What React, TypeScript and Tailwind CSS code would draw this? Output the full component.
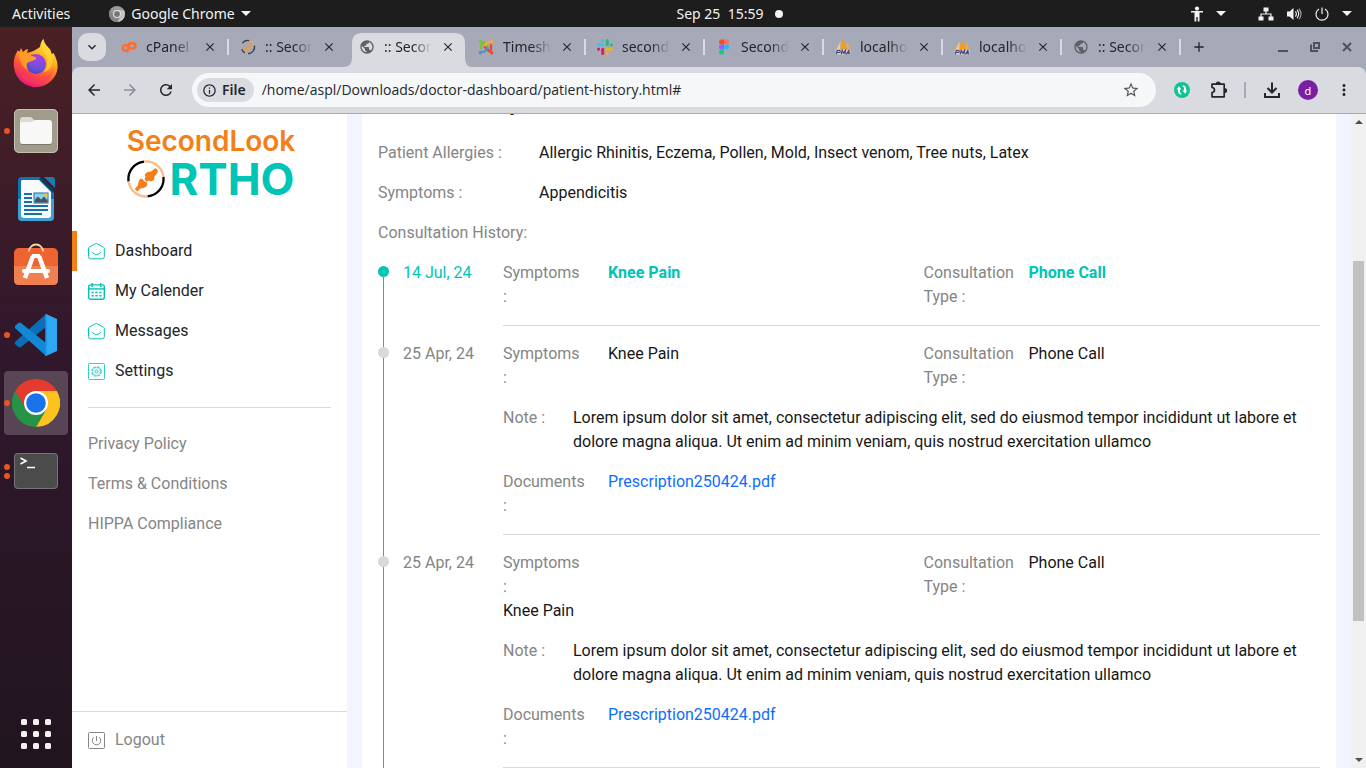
import React from "react";
import {
  MdArrowBack,
  MdArrowForward,
  MdClose,
  MdKeyboardArrowDown,
  MdMoreVert,
  MdAdd,
  MdPublic,
  MdRefresh,
  MdStarBorder,
  MdInfoOutline,
} from "react-icons/md";

/* ---------- Favicons ---------- */

function CpanelIcon() {
  return (
    <svg viewBox="0 0 16 16" className="size-4" fill="none" stroke="#ff6c2c" strokeWidth="2.6" strokeLinecap="round" strokeLinejoin="round">
      <path d="M6.800 6.300H4.400a2.600 2.600 0 0 0 0 5.200h1.100" />
      <path d="M6.600 12.400 8.700 4.300h3.200a2.600 2.600 0 0 1 0 5.200H9.600" />
    </svg>
  );
}

function OrthoFavicon() {
  return (
    <svg viewBox="0 0 16 16" className="size-4" fill="none">
      <path d="M2.400 4.200A6.600 6.600 0 0 1 9.500 1.600M1.600 9.600A6.600 6.600 0 0 0 5 13.900" stroke="#3a3d45" strokeWidth="1.300" />
      <path d="M9.500 1.600a6.600 6.600 0 0 1 4.900 5M1.500 6.800a6.600 6.600 0 0 0 .3 3.400M5 13.900a6.600 6.600 0 0 0 3 .7" stroke="#e8a676" strokeWidth="1.300" />
      <path d="M14.400 6.600A6.600 6.600 0 0 1 8 14.600" stroke="#3a3d45" strokeWidth="1.300" />
      <path d="M4.200 11.800 7 7.200l1-.3 3.200-3.300 1 1L9.600 8.400l-.4 1-4 3.300z" fill="#f8992f" />
    </svg>
  );
}

function JoomlaIcon() {
  return (
    <svg viewBox="0 0 16 16" className="size-4" fill="none" strokeWidth="2.200" strokeLinecap="round" strokeLinejoin="round">
      <path d="M3 10V5.800L5.200 4l4.600 4.400" stroke="#7ac043" />
      <path d="M6 3.200 4.600 2.600 2.600 2.600" stroke="#7ac043" />
      <path d="M6 7l4.200-4 3 .2" stroke="#f9a541" />
      <path d="M13 6v4.400L11 12.400 6.600 8" stroke="#f44321" />
      <path d="m10 9-4 4-3-.2" stroke="#5091cd" />
      <circle cx="2.300" cy="2.300" r="1.700" fill="#7ac043" />
      <circle cx="13.700" cy="2.300" r="1.700" fill="#f9a541" />
      <circle cx="13.700" cy="13.700" r="1.700" fill="#f44321" />
      <circle cx="2.300" cy="13.700" r="1.700" fill="#5091cd" />
    </svg>
  );
}

function SlackIcon() {
  return (
    <svg viewBox="0 0 16 16" className="size-4">
      <g fill="#36c5f0">
        <rect x="0" y="4.200" width="7.200" height="3" rx="1.500" />
        <path d="M5.700 0a1.500 1.500 0 0 1 1.500 1.500V3H5.700a1.500 1.500 0 0 1 0-3z" />
      </g>
      <g fill="#2eb67d">
        <rect x="8.800" y="0" width="3" height="7.200" rx="1.500" />
        <path d="M16 5.700a1.500 1.500 0 0 1-1.500 1.500H13V5.700a1.500 1.500 0 0 1 3 0z" />
      </g>
      <g fill="#ecb22e">
        <rect x="8.800" y="8.800" width="7.200" height="3" rx="1.500" />
        <path d="M10.300 16a1.500 1.500 0 0 1-1.500-1.500V13h1.500a1.500 1.500 0 0 1 0 3z" />
      </g>
      <g fill="#e01e5a">
        <rect x="4.200" y="8.800" width="3" height="7.200" rx="1.500" />
        <path d="M0 10.300a1.500 1.500 0 0 1 1.500-1.500H3v1.500a1.500 1.500 0 0 1-3 0z" />
      </g>
    </svg>
  );
}

function FigmaIcon() {
  return (
    <svg viewBox="0 0 16 16" className="size-4">
      <path d="M8 .5H5.500a2.500 2.500 0 0 0 0 5H8z" fill="#f24e1e" />
      <path d="M8 .5h2.500a2.500 2.500 0 0 1 0 5H8z" fill="#ff7262" />
      <path d="M8 5.500H5.500a2.500 2.500 0 0 0 0 5H8z" fill="#a259ff" />
      <circle cx="10.500" cy="8" r="2.500" fill="#1abcfe" />
      <path d="M8 10.500H5.500A2.500 2.500 0 1 0 8 13z" fill="#0acf83" />
    </svg>
  );
}

function PmaIcon() {
  return (
    <svg viewBox="0 0 16 16" className="size-4">
      <path d="M5.600 2 1.600 10h3.600z" fill="#f6c78a" />
      <path d="M7.400.8 5.800 10h5.400C11 6 9.600 3 7.400.8z" fill="#f89c0e" />
      <path d="M11.400 3.200 11.800 10h3C14.600 7 13.200 4.600 11.400 3.200z" fill="#f6ab45" />
      <path d="M.5 10.500h15v5.200H.5z" fill="#e3e4ea" opacity=".6" />
      <path d="M1.300 15.300 2.200 11.500h2.300c1.200 0 1 2-.4 2H2.200M6.300 15.300l.9-3.800L8.500 14l2-2.500-.6 3.800M11.300 15.300l2.500-3.800.7 3.800M12.500 14.200h2" stroke="#4a4478" strokeWidth="1.200" fill="none" />
    </svg>
  );
}

const globe = <MdPublic className="size-4 text-[#5d6066]" />;

type Tab = { title: string; icon: React.ReactNode; active?: boolean; divider?: boolean };

const tabs: Tab[] = [
  { title: "cPanel - Tools", icon: <CpanelIcon />, divider: true },
  { title: ":: Second Look", icon: <OrthoFavicon /> },
  { title: ":: Second Look", icon: globe, active: true },
  { title: "Timesheets", icon: <JoomlaIcon />, divider: true },
  { title: "secondlook", icon: <SlackIcon />, divider: true },
  { title: "SecondLook", icon: <FigmaIcon />, divider: true },
  { title: "localhost", icon: <PmaIcon />, divider: true },
  { title: "localhost", icon: <PmaIcon />, divider: true },
  { title: ":: Second Look", icon: globe, divider: true },
];

/* ---------- Desktop top bar ---------- */

function Caret() {
  return (
    <svg viewBox="0 0 10 5" className="h-[5px] w-[10px]" fill="#f2f2f2">
      <path d="M0 0h10L5 5z" />
    </svg>
  );
}

function TopBar() {
  return (
    <header className="grid h-[27px] shrink-0 grid-cols-3 items-center bg-[#1d1d1d] px-3 font-['Noto_Sans',sans-serif] text-sm text-[#f2f2f2]">
      <div className="flex items-center gap-[39px]">
        <button type="button">Activities</button>
        <button type="button" className="flex items-center gap-[6px] whitespace-nowrap">
          <svg viewBox="0 0 16 16" className="size-4">
            <circle cx="8" cy="8" r="8" fill="#9a9a9a" />
            <path d="M8 4.200h7A8 8 0 0 1 8.500 16l3.300-6z" fill="#c4c4c4" />
            <path d="M1.300 3.800A8 8 0 0 0 8.500 16l1.800-4.200-5.600-2z" fill="#868686" />
            <circle cx="8" cy="8" r="3.900" fill="#e4e4e4" />
            <circle cx="8" cy="8" r="2.900" fill="#777" />
          </svg>
          Google Chrome
          <Caret />
        </button>
      </div>
      <div className="flex items-center justify-center gap-3 pl-[94px]">
        <button type="button" className="whitespace-pre">{"Sep 25  15:59"}</button>
        <span className="size-2 rounded-full bg-[#f2f2f2]" />
      </div>
      <div className="flex items-center justify-end pr-[2px]">
        <button type="button" aria-label="Accessibility" className="flex items-center gap-3">
          <svg viewBox="0 0 14 16" className="h-4 w-[14px]" fill="#f2f2f2">
            <circle cx="7" cy="2.600" r="2.100" />
            <path d="M1 5h12v1.500H9.500V15.500H7.700V11H6.300v4.500H4.500v-9H1z" />
          </svg>
          <Caret />
        </button>
        <button type="button" aria-label="System menu" className="ml-8 flex items-center gap-3">
          <svg viewBox="0 0 16 16" className="size-4" fill="#f2f2f2">
            <path d="M5.500 1.500h5v4h-5zM.5 10.500h5v4h-5zM10.500 10.500h5v4h-5z" />
            <path d="M8 5v3M3 11V8h10v3" stroke="#f2f2f2" strokeWidth="1.200" fill="none" />
          </svg>
          <svg viewBox="0 0 16 16" className="size-4" fill="none" stroke="#f2f2f2" strokeWidth="1.200">
            <path d="M1 5.500h2.500L7.500 2v12L3.500 10.500H1z" fill="#f2f2f2" stroke="none" />
            <path d="M9.300 5.500c1.400 1.200 1.400 3.800 0 5M11 4c2.300 2 2.300 6 0 8" />
            <path d="M12.800 2.800c3 2.700 3 7.700 0 10.400" opacity=".6" />
          </svg>
          <svg viewBox="0 0 16 16" className="size-4" fill="none" stroke="#f2f2f2" strokeWidth="1.200">
            <path d="M8 1.500v6.500M5 3a6 6 0 1 0 6 0" />
          </svg>
          <Caret />
        </button>
      </div>
    </header>
  );
}

/* ---------- Dock ---------- */

function Firefox() {
  return (
    <svg viewBox="0 1 48 48" className="size-12">
      <defs>
        <linearGradient id="ff-body" x1=".8" y1="0" x2=".3" y2="1">
          <stop offset="0" stopColor="#fff44f" />
          <stop offset=".35" stopColor="#ffb320" />
          <stop offset=".65" stopColor="#ff5a36" />
          <stop offset="1" stopColor="#e5137f" />
        </linearGradient>
        <radialGradient id="ff-orb" cx=".6" cy=".2" r=".9">
          <stop offset="0" stopColor="#a640e6" />
          <stop offset=".6" stopColor="#6b51dd" />
          <stop offset="1" stopColor="#4040b8" />
        </radialGradient>
      </defs>
      <path d="M28 9c.5-4 2-7 3.500-8 .2 5 4 7 7 11l1 4 2-1c4 7 5.500 14 2.500 21A22 22 0 0 1 2 29c-1-7 1-12 4-17l1 3 2-5 2 4c2-2 4-3 5-3l-1 4c5-1 9-3 13-6z" fill="url(#ff-body)" />
      <path d="M31.500 1c-2 6-2 9 1 13 4 6 4 14-1 20 6-1 9-6 9-14 0-8-8-12-9-19z" fill="#ffd936" opacity=".7" />
      <circle cx="24" cy="26" r="10" fill="url(#ff-orb)" />
      <path d="M6 13c4 1 6 2 9 2 2 3 6 3 9 4 1 3-4 4-7 5-3 1-3 4-1 8-6-3-9-10-10-19z" fill="#ff9a28" />
      <path d="M6 30c4 9 14 13 24 10 6-2 10-6 12-11-1 10-9 17-18 17S8 41 6 30z" fill="#ff3b5c" opacity=".45" />
    </svg>
  );
}

function Files() {
  return (
    <svg viewBox="0 0 48 48" className="size-12">
      <rect x="2" y="2" width="44" height="44" rx="5" fill="#a09b8a" />
      <rect x="2.500" y="2.500" width="43" height="43" rx="4.500" fill="none" stroke="#c5c1b4" />
      <path d="M8 13q0-3 3-3h8l4 4v4H8z" fill="#dedacd" />
      <path d="M8 17q0-2 2-2h10l3-2h14q3 0 3 3v18q0 3-3 3H11q-3 0-3-3z" fill="#f8f8f7" />
      <path d="M9 37.500h30" stroke="#7d796b" />
    </svg>
  );
}

function Writer() {
  return (
    <svg viewBox="0 0 48 48" className="size-12">
      <path d="M10 2h18l14 14v26q0 4-4 4H10q-4 0-4-4V6q0-4 4-4z" fill="#0e74ae" />
      <path d="M6 24h36v18q0 4-4 4H10q-4 0-4-4z" fill="#3ea1d4" />
      <path d="M10 5h17l12 12v23q0 3-3 3H12q-3 0-3-3V6z" fill="#f8fafb" />
      <path d="M32 2h8q3 0 3 3v8z" fill="#1b7cae" />
      <path d="M28 3l14 14" stroke="#073f66" strokeWidth="2.500" />
      <path d="M12 19h8M12 23h8M12 27h8M12 31h24M12 35h24M12 39h18" stroke="#1672a6" strokeWidth="2" />
      <rect x="22" y="18" width="14" height="10" fill="#8dd0f0" stroke="#1672a6" />
      <path d="M23 27.500v-3l3-3 3 3 3-3 3.500 4v2z" fill="#48525a" />
      <path d="M32 18.500h3.500V22q-3 0-3.500-3.500z" fill="#fbc02d" />
    </svg>
  );
}

function Software() {
  return (
    <svg viewBox="0 3 48 48" className="size-12">
      <rect x="2" y="8" width="44" height="37" rx="5" fill="#ee6430" />
      <path d="M2 26h44v14q0 5-5 5H7q-5 0-5-5z" fill="#f0804f" />
      <path d="M17 11.500a7 7 0 0 1 14 0" fill="none" stroke="#f6d5ae" strokeWidth="1.800" />
      <g stroke="#fff" strokeLinecap="round" fill="none">
        <path d="m21 16-8 22M27 16l8 22" strokeWidth="4.500" strokeLinecap="butt" />
        <path d="M20 16h8" strokeWidth="4" strokeLinecap="butt" />
        <path d="M12 31h24" strokeWidth="4.200" />
      </g>
    </svg>
  );
}

function VsCode() {
  return (
    <svg viewBox="0 0 48 48" className="size-12">
      <path d="M34 3 45 8v32l-11 5z" fill="#2ea8f4" />
      <path d="M34 3v13L9 36q-1.500 1-3-.3L3.500 33.500q-1.500-1.500 0-3z" fill="#0a6fb8" />
      <path d="M34 45V32L9 12q-1.500-1-3 .3L3.500 14.500q-1.500 1.500 0 3z" fill="#1287d4" />
      <path d="M34 3v42" stroke="#2196e4" strokeWidth="1.500" />
    </svg>
  );
}

function Chrome() {
  return (
    <svg viewBox="0 0 48 48" className="size-12">
      <path d="M24 12H44.800A24 24 0 0 0 3.200 12L13.600 30 24 24z" fill="#e33b2e" />
      <path d="M24 12h20.800A24 24 0 0 1 24 48l10.400-18L24 24z" fill="#fcc31e" />
      <path d="M3.200 12A24 24 0 0 0 24 48l10.400-18L24 24l-10.400 6z" fill="#269446" />
      <circle cx="24" cy="24" r="12" fill="#fff" />
      <circle cx="24" cy="24" r="9.800" fill="#1a73e8" />
    </svg>
  );
}

function Terminal() {
  return (
    <svg viewBox="0 0 48 48" className="size-12">
      <rect x="2" y="6" width="44" height="36" rx="4" fill="#4b4b4b" />
      <rect x="2.500" y="6.500" width="43" height="35" rx="3.500" fill="none" stroke="#757575" />
      <path d="m8.500 11 5.500 3-5.500 3M15 20.500h8" stroke="#fff" strokeWidth="1.600" fill="none" />
    </svg>
  );
}

const dock = [
  { name: "Firefox", icon: <Firefox />, windows: 0 },
  { name: "Files", icon: <Files />, windows: 1 },
  { name: "LibreOffice Writer", icon: <Writer />, windows: 0 },
  { name: "Software", icon: <Software />, windows: 0 },
  { name: "Visual Studio Code", icon: <VsCode />, windows: 1 },
  { name: "Google Chrome", icon: <Chrome />, windows: 1, active: true },
  { name: "Terminal", icon: <Terminal />, windows: 2 },
];

function Dock() {
  return (
    <nav aria-label="Dock" className="flex w-[72px] shrink-0 flex-col items-center gap-1 bg-linear-to-b from-[#4b2024] via-[#30172c] via-45% to-[#21151f] pt-[4px] pb-[2px]">
      {dock.map((app) => (
        <button
          key={app.name}
          type="button"
          aria-label={app.name}
          className={`relative flex size-16 items-center justify-center rounded ${app.active ? "bg-white/20" : ""}`}
        >
          <span className="absolute inset-y-0 left-0 flex flex-col items-center justify-center gap-[3px]">
            {Array.from({ length: app.windows }, (_, i) => (
              <i key={i} className="size-[6px] rounded-full bg-[#e95420]" />
            ))}
          </span>
          {app.icon}
        </button>
      ))}
      <button type="button" aria-label="Show applications" className="mt-auto flex size-16 items-center justify-center">
        <svg viewBox="0 0 30 30" className="size-[30px]" fill="#f2f1ef">
          {[0, 12, 24].map((y) => [0, 12, 24].map((x) => <rect key={`${x}-${y}`} x={x} y={y} width="6" height="6" rx="1.500" />))}
        </svg>
      </button>
    </nav>
  );
}

/* ---------- Browser chrome ---------- */

function TabStrip() {
  return (
    <div className="flex h-10 shrink-0 items-center bg-[#a6a9b7] pl-[6px] text-[#24262b]">
      <button type="button" aria-label="Search tabs" className="mr-1 flex size-7 shrink-0 items-center justify-center rounded-[10px] bg-[#dadbe1]">
        <MdKeyboardArrowDown className="size-4" />
      </button>
      {tabs.map((tab, i) => (
        <div key={i} className="relative flex h-full w-[119px] shrink-0 items-center">
          {tab.active && (
            <svg viewBox="0 0 129 34" className="absolute bottom-0 -left-[5px] h-[34px] w-[129px]" fill="#dadbe1">
              <path d="M0 34q9 0 9-9V10Q9 0 19 0h93q10 0 10 10v14q0 10 7 10z" />
            </svg>
          )}
          <div className="relative flex w-full items-center pl-[11px]">
            <span className="shrink-0">{tab.icon}</span>
            <span className="ml-[9px] w-12 overflow-hidden mask-r-from-60% text-sm whitespace-nowrap">{tab.title}</span>
            <button type="button" aria-label="Close tab" className="ml-2 flex size-4 items-center justify-center">
              <MdClose className="size-[14px]" />
            </button>
            {tab.divider && <span className="ml-auto h-4 w-[2px] bg-[#dadbe1]" />}
          </div>
        </div>
      ))}
      <button type="button" aria-label="New tab" className="ml-2 flex size-5 items-center justify-center">
        <MdAdd className="size-4" />
      </button>
      <div className="ml-auto flex items-center gap-4 pr-[11px] text-[#4e5159]">
        <button type="button" aria-label="Minimize">
          <svg viewBox="0 0 16 16" className="size-4"><path d="M3 12h10" stroke="currentColor" strokeWidth="2" /></svg>
        </button>
        <button type="button" aria-label="Restore">
          <svg viewBox="0 0 16 16" className="size-4" fill="none" stroke="currentColor" strokeWidth="2"><path d="M7 4h5v5H7zM4 5.500V12h7" /></svg>
        </button>
        <button type="button" aria-label="Close">
          <svg viewBox="0 0 16 16" className="size-4"><path d="m4 4 8 8m0-8-8 8" stroke="currentColor" strokeWidth="2" /></svg>
        </button>
      </div>
    </div>
  );
}

function Toolbar() {
  return (
    <div className="bg-[#a6a9b7]">
      <div className="flex h-[47px] shrink-0 items-center rounded-t-lg border-b border-[#a9a9b0] bg-[#dadbe1] px-[13px] text-[#24262b]">
        <div className="flex items-center gap-[18px]">
          <button type="button" aria-label="Back"><MdArrowBack className="size-[18px]" /></button>
          <button type="button" aria-label="Forward" className="text-[#8d8f96]"><MdArrowForward className="size-[18px]" /></button>
          <button type="button" aria-label="Reload"><MdRefresh className="size-[18px]" /></button>
        </div>
        <div className="ml-[17px] flex h-[34px] min-w-0 flex-1 items-center rounded-full bg-[#f6f7f9] pr-4 pl-[5px] font-['Open_Sans',sans-serif] text-sm">
          <button type="button" className="flex h-6 items-center gap-[5px] rounded-full bg-[#dadbe1] px-[5px] pr-2 font-['Noto_Sans',sans-serif] font-semibold">
            <MdInfoOutline className="size-[15px]" />
            File
          </button>
          <input
            aria-label="Address"
            className="ml-2 min-w-0 flex-1 bg-transparent outline-none"
            defaultValue="/home/aspl/Downloads/doctor-dashboard/patient-history.html#"
          />
          <button type="button" aria-label="Bookmark" className="text-[#55575d]"><MdStarBorder className="size-[18px]" /></button>
        </div>
        <div className="ml-[17px] flex items-center">
          <button type="button" aria-label="Sync extension">
            <svg viewBox="0 0 18 18" className="size-[18px]" fill="none">
              <circle cx="9" cy="9" r="8" fill="#0fc494" />
              <path d="M6 11.500V7.500M12 6.500v4" stroke="#fff" strokeWidth="2" />
              <path d="M6 11q.3 1.800 2.300 2M12 7q-.3-1.800-2.300-2" stroke="#fff" strokeWidth="1.600" />
              <path d="m3.600 8.500 2.400-3.300 2.400 3.300zM9.600 9.500l2.400 3.300 2.400-3.300z" fill="#fff" />
            </svg>
          </button>
          <button type="button" aria-label="Extensions" className="ml-[19px]">
            <svg viewBox="0 0 18 18" className="size-[18px]" fill="none" stroke="currentColor" strokeWidth="1.700" strokeLinejoin="round">
              <path d="M2 3.200h12.200v12.600H2v-4.300c3.300-.4 3.300-4.600 0-5z" />
              <path d="M6.500 3c0-2.300 3.400-2.300 3.400 0M14.500 7.800c2.400 0 2.400 3.400 0 3.400" fill="currentColor" />
            </svg>
          </button>
          <span className="mr-[17px] ml-4 h-4 w-[2px] bg-[#a6a9b7]" />
          <button type="button" aria-label="Downloads">
            <svg viewBox="0 0 18 18" className="size-[18px]" fill="none" stroke="currentColor" strokeWidth="2">
              <path d="M9 1.500v9.500M4.500 7 9 11.500 13.500 7M2 12v4h14v-4" />
            </svg>
          </button>
          <button type="button" aria-label="Profile" className="ml-[17px] flex size-5 items-center justify-center rounded-full bg-[#7b1fa2] font-['Noto_Sans',sans-serif] text-[11px] leading-none text-white">
            d
          </button>
          <button type="button" aria-label="Menu" className="ml-[17px]"><MdMoreVert className="size-[18px]" /></button>
        </div>
      </div>
    </div>
  );
}

function Scrollbar() {
  return (
    <div aria-hidden="true" className="flex w-[15px] shrink-0 flex-col items-center bg-[#f1f1f1]">
      <span className="flex h-4 items-center"><svg viewBox="0 0 8 4" className="h-1 w-2" fill="#505050"><path d="M0 4h8L4 0z" /></svg></span>
      <span className="grow-[131]" />
      <span className="w-[11px] grow-[360] bg-[#c1c1c1]" />
      <span className="grow-[131]" />
      <span className="flex h-4 items-center"><svg viewBox="0 0 8 4" className="h-1 w-2" fill="#505050"><path d="M0 0h8L4 4z" /></svg></span>
    </div>
  );
}

/* ---------- Sidebar ---------- */

function HomeIcon() {
  return (
    <svg viewBox="0 0 17 17" className="size-[17px]" fill="none" stroke="#00c4b6" strokeLinecap="round" strokeLinejoin="round">
      <path d="M.5 5.600Q.5 4.700 1.300 4.200L7.300.8q1-.5 2 0l6.200 3.400q.8.500.8 1.400v8.200q0 2-2 2H2.500q-2 0-2-2z" />
      <path d="M4.500 9.500c2 2.700 6 2.700 8 0" />
    </svg>
  );
}

function CalendarIcon() {
  return (
    <svg viewBox="0 0 17 17" className="size-[17px]" fill="none" stroke="#00c4b6">
      <rect x=".7" y="1.900" width="15.600" height="14.400" rx="2" strokeWidth="1.400" />
      <path d="M4.200 0v4M12.800 0v4" strokeWidth="1.400" />
      <path d="M1 5.900h15" strokeWidth="1.400" />
      <path d="M3.500 9.500h2.300m1.500 0h2.400m1.500 0h2.300M3.500 12.800h2.300m1.500 0h2.400m1.500 0h2.300" strokeWidth="1.600" />
    </svg>
  );
}

function SettingsIcon() {
  return (
    <svg viewBox="0 0 17 17" className="size-[17px]" fill="none" stroke="#00c4b6">
      <rect x=".5" y=".5" width="16" height="16" rx="1" strokeWidth=".8" />
      <circle cx="8.500" cy="8.500" r="4.700" strokeWidth="1.200" strokeDasharray="2.500 1.190" opacity=".8" />
      <circle cx="8.500" cy="8.500" r="3.900" strokeWidth=".5" />
      <circle cx="8.500" cy="8.500" r="1.500" strokeWidth=".9" />
    </svg>
  );
}

function LogoutIcon() {
  return (
    <svg viewBox="0 0 17 17" className="size-[17px]" fill="none" stroke="#858585">
      <rect x=".5" y=".5" width="16" height="16" rx="1" />
      <path d="M8.500 4v5M6 5.200a4.200 4.200 0 1 0 5 0" />
    </svg>
  );
}

function Logo() {
  return (
    <div className="flex h-[117px] flex-col items-center pt-[10px] pl-[3px] font-['Inter',sans-serif]">
      <span className="text-[28px] leading-[34px] font-semibold text-[#f57f17]">SecondLook</span>
      <span className="flex items-center gap-1 leading-[42px]">
        <svg viewBox="0 0 38 38" className="size-[38px]" fill="none">
          <path d="M17 1.700A17.400 17.400 0 0 0 1.600 21.500" stroke="#000" strokeWidth="2.300" />
          <path d="M17 1.600A17.400 17.400 0 0 1 36.400 17" stroke="#fbbd8c" strokeWidth="2.300" />
          <path d="M36.400 17A17.400 17.400 0 0 1 20.500 36.400" stroke="#000" strokeWidth="2.300" />
          <path d="M20.500 36.400A17.400 17.400 0 0 1 1.600 21.500" stroke="#fbbd8c" strokeWidth="2.300" />
          <path d="m17.500 19.500 1-2.500-.8-2.500 2.800-2.500 3.500-.5 4.500-3.500 2 2 .5 2-3.500 4.500-.5 3.500-3 1.500-2.500-1-2 1.200z" fill="#f57f17" />
          <path d="m13 18.800 2.500.2 1.800 2.300 2.700 1.200.3 3-2.800 2.300-4 .7-3 2.800-1.500-.8L7.800 29l3-3.500.7-3.500z" fill="#f57f17" />
        </svg>
        <span className="text-[44px] font-bold text-[#00c4b6]">RTHO</span>
      </span>
    </div>
  );
}

const mainLinks = [
  { label: "Dashboard", icon: <HomeIcon />, active: true },
  { label: "My Calender", icon: <CalendarIcon /> },
  { label: "Messages", icon: <HomeIcon /> },
  { label: "Settings", icon: <SettingsIcon /> },
];

function Sidebar() {
  return (
    <aside className="flex w-[275px] shrink-0 flex-col bg-white">
      <Logo />
      <nav aria-label="Main" className="flex flex-col text-[#212529]">
        {mainLinks.map((link) => (
          <a
            key={link.label}
            href="#"
            className={`flex h-10 items-center gap-[10px] border-l-5 pl-[11px] ${link.active ? "border-[#f57f17]" : "border-transparent"}`}
          >
            {link.icon}
            {link.label}
          </a>
        ))}
      </nav>
      <hr className="mx-4 my-4 border-[#d9d9d9]" />
      <nav aria-label="Legal" className="flex flex-col px-4 text-[#858585]">
        {["Privacy Policy", "Terms & Conditions", "HIPPA Compliance"].map((label) => (
          <a key={label} href="#" className="flex h-10 items-center">{label}</a>
        ))}
      </nav>
      <div className="mt-auto border-t border-[#d9d9d9] px-4 py-2">
        <a href="#" className="flex h-10 items-center gap-[10px] text-[#858585]">
          <LogoutIcon />
          Logout
        </a>
      </div>
    </aside>
  );
}

/* ---------- Patient history ---------- */

type Visit = {
  date: string;
  symptom: string;
  type: string;
  current?: boolean;
  stacked?: boolean;
  note?: string;
  document?: string;
};

const note =
  "Lorem ipsum dolor sit amet, consectetur adipiscing elit, sed do eiusmod tempor incididunt ut labore et dolore magna aliqua. Ut enim ad minim veniam, quis nostrud exercitation ullamco";

const visits: Visit[] = [
  { date: "14 Jul, 24", symptom: "Knee Pain", type: "Phone Call", current: true },
  { date: "25 Apr, 24", symptom: "Knee Pain", type: "Phone Call", note, document: "Prescription250424.pdf" },
  { date: "25 Apr, 24", symptom: "Knee Pain", type: "Phone Call", stacked: true, note, document: "Prescription250424.pdf" },
];

function VisitRow({ visit }: { visit: Visit }) {
  const value = visit.current ? "font-bold text-[#00c4b6]" : "text-[#171717]";
  const label = "w-[105px] shrink-0 pr-6 text-[#858585]";
  return (
    <li className="flex">
      <div className="relative flex w-[25px] shrink-0">
        <span className={`ml-[5px] w-px bg-[#00c4b6] ${visit.current ? "mt-[5px]" : ""}`} />
        <span className={`absolute top-[5px] left-0 size-[11px] rounded-full ${visit.current ? "bg-[#00c4b6]" : "bg-[#d9d9d9]"}`} />
      </div>
      <time className={`w-[100px] shrink-0 ${visit.current ? "text-[#00c4b6]" : "text-[#858585]"}`}>{visit.date}</time>
      <div className="mb-4 flex min-w-0 flex-1 flex-col gap-4 border-b border-[#d9d9d9] pb-4">
        <dl className="grid grid-cols-2 gap-6">
          <div className={visit.stacked ? "block" : "flex"}>
            <dt className={label}>Symptoms :</dt>
            <dd className={value}>{visit.symptom}</dd>
          </div>
          <div className="flex">
            <dt className={label}>Consultation Type :</dt>
            <dd className={value}>{visit.type}</dd>
          </div>
        </dl>
        {visit.note && (
          <dl className="flex">
            <dt className="w-[70px] shrink-0 text-[#858585]">Note :</dt>
            <dd className="text-[#171717]">{visit.note}</dd>
          </dl>
        )}
        {visit.document && (
          <dl className="flex">
            <dt className={label}>Documents :</dt>
            <dd><a href="#" className="text-[#0d6efd]">{visit.document}</a></dd>
          </dl>
        )}
      </div>
    </li>
  );
}

function PatientHistory() {
  return (
    <main className="min-w-0 flex-1 overflow-hidden bg-[#f2f4ff] px-[15px]">
      <section className="-mt-[22px] bg-white px-4">
        <h2 className="mb-[25px] text-[20px] leading-6 font-bold text-[#171717]">Medical History</h2>
        <dl className="flex flex-col gap-4">
          <div className="flex">
            <dt className="w-[161px] shrink-0 text-[#858585]">Patient Allergies :</dt>
            <dd className="text-[#171717]">Allergic Rhinitis, Eczema, Pollen, Mold, Insect venom, Tree nuts, Latex</dd>
          </div>
          <div className="flex">
            <dt className="w-[161px] shrink-0 text-[#858585]">Symptoms :</dt>
            <dd className="text-[#171717]">Appendicitis</dd>
          </div>
        </dl>
        <h3 className="my-4 text-[#858585]">Consultation History:</h3>
        <ol>
          {visits.map((visit, i) => (
            <VisitRow key={i} visit={visit} />
          ))}
        </ol>
      </section>
    </main>
  );
}

export default function App() {
  return (
    <div className="flex h-screen flex-col overflow-hidden">
      <TopBar />
      <div className="flex min-h-0 flex-1">
        <Dock />
        <div className="flex min-w-0 flex-1 flex-col font-['Noto_Sans',sans-serif]">
          <TabStrip />
          <Toolbar />
          <div className="flex min-h-0 flex-1 font-[Roboto,sans-serif] text-base">
            <Sidebar />
            <PatientHistory />
            <Scrollbar />
          </div>
        </div>
      </div>
    </div>
  );
}
